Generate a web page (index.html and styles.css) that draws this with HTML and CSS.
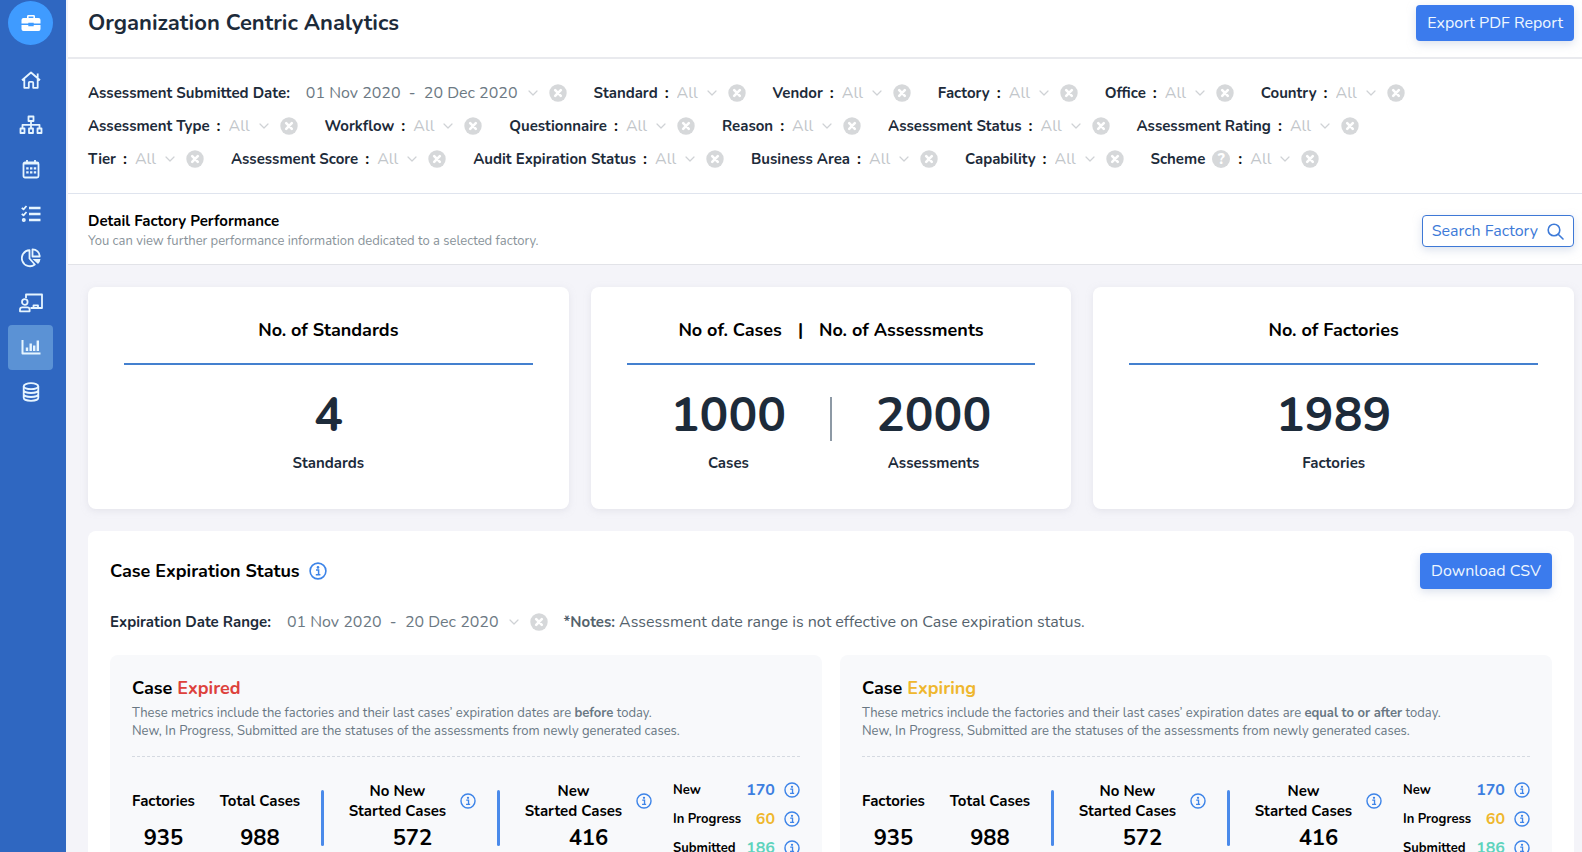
FILE: index.html
```html
<!DOCTYPE html>
<html lang="en">
<head>
<meta charset="utf-8">
<meta name="viewport" content="width=device-width, initial-scale=1">
<title>Organization Centric Analytics</title>
<link rel="stylesheet" href="styles.css">
</head>
<body>
<svg class="sprite" aria-hidden="true">
  <symbol id="clear" viewBox="0 0 18 18"><circle cx="9" cy="9" r="8.7" fill="#d6d8da"/><path d="M6.2 6.2l5.6 5.6M11.8 6.2l-5.6 5.6" stroke="#fff" stroke-width="2.6" stroke-linecap="round"/></symbol>
  <symbol id="chevron" viewBox="0 0 10 6"><path d="M1 1l4 4 4-4" fill="none" stroke="#cfd2d5" stroke-width="1.2" stroke-linecap="round" stroke-linejoin="round"/></symbol>
  <symbol id="info" viewBox="0 0 18 18"><circle cx="9" cy="9" r="7.9" fill="none" stroke="#3d84e8" stroke-width="1.6"/><circle cx="9" cy="5.4" r="1.3" fill="#3d84e8"/><path d="M7 8h2.6v4.6M6.8 12.8h4.6" fill="none" stroke="#3d84e8" stroke-width="1.5"/></symbol>
</svg>
<div class="app">
  <aside class="sidebar">
    <a class="brand" href="#" aria-label="Workspace"><svg width="20" height="18" viewBox="0 0 20 18"><path fill="#fff" fill-rule="evenodd" d="M6 4V2.400Q6 1 7.400 1h5.200Q14 1 14 2.400V4h3.500Q19.500 4 19.500 6v3.500h-6.800V8.700H7.300v.8H.5V6q0-2 2-2zM7.600 4h4.800V2.600H7.600zM.5 10.900h6.800v1.400h5.400v-1.400h6.800V15q0 2-2 2h-15q-2 0-2-2z"/></svg></a>
    <nav class="nav" aria-label="Main">
      <a href="#" aria-label="Home"><svg width="20" height="18" viewBox="0 0 20 18"><path d="M1 9.300L10 1.500l9 7.800M3.300 8v8.800h4.500v-5q0-1 1-1h2.400q1 0 1 1v5h4.500V8M16.700 6.500V2.500"/></svg></a>
      <a href="#" aria-label="Organization"><svg width="24" height="20" viewBox="0 0 24 20"><path d="M9.500 1.500h5v4.500h-5zM12 6v7M3.500 13V9.800h17V13M1.500 13.500h4v4.500h-4zM10 13.500h4v4.500h-4zM18.500 13.500h4v4.500h-4z"/></svg></a>
      <a href="#" aria-label="Calendar"><svg width="18" height="20" viewBox="0 0 18 20"><rect x="1.500" y="3.500" width="15" height="15" rx="1.500"/><path d="M2 4.500h14M5 1v3M13 1v3"/><path stroke-width="2.200" stroke-dasharray="2.400 1.400" d="M4.200 9.400h10M4.200 13.400h10"/></svg></a>
      <a href="#" aria-label="Checklists"><svg width="20" height="18" viewBox="0 0 20 18"><path stroke-width="2.300" d="M8 3h11.500M8 9h11.500M8 15h11.500"/><path d="M.8 2.800l1.700 1.500L5.500 1M.8 8.800l1.700 1.500L5.500 7"/><circle cx="2.800" cy="15" r="1.100"/></svg></a>
      <a href="#" aria-label="Reports"><svg width="20" height="20" viewBox="0 0 20 20"><path d="M8.500 2.200a8 8 0 1 0 5.300 14.300L8.500 10.500zM11.500 1.300v7.200h7.200a7.300 7.300 0 0 0-7.200-7.200z"/><path class="solid" d="M11.500 11h8a8 8 0 0 1-2.500 5z"/></svg></a>
      <a href="#" aria-label="Training"><svg width="24" height="20" viewBox="0 0 24 20"><path d="M7 5V1.500h16V15H11.500M14.500 15v-2.600h4.500V15"/><circle cx="5.800" cy="9" r="2.800"/><path d="M1 18.300v-1.700q0-2.300 2.300-2.300h5q2.300 0 2.300 2.300v1.700z"/></svg></a>
      <a class="active" href="#" aria-label="Analytics" aria-current="page"><svg width="20" height="18" viewBox="0 0 20 18"><path stroke-width="2" d="M1.500 2v13.500h18"/><path stroke-width="2.400" d="M6 9.500v3.500M9.700 5.500V13M13.200 7.500V13M16.800 2.500V13"/></svg></a>
      <a href="#" aria-label="Data"><svg width="18" height="20" viewBox="0 0 18 20"><ellipse cx="9" cy="4.200" rx="7.300" ry="3"/><path d="M1.700 4.200v11.600c0 1.700 3.300 3 7.300 3s7.300-1.300 7.300-3V4.200M1.700 8c0 1.700 3.300 3 7.300 3s7.300-1.300 7.300-3M1.700 12c0 1.700 3.300 3 7.300 3s7.300-1.300 7.300-3"/></svg></a>
    </nav>
  </aside>

  <main class="main">
    <header class="header">
      <h1>Organization Centric Analytics</h1>
      <button class="primary" type="button">Export PDF Report</button>
    </header>

    <section class="filters" aria-label="Filters">
      <div class="filter-row">
        <div class="filter date"><span class="name">Assessment Submitted Date:</span><button class="range" type="button">01 Nov 2020&nbsp; -&nbsp; 20 Dec 2020<svg class="chev"><use href="#chevron"/></svg></button><button class="clear" type="button" aria-label="Clear date"><svg><use href="#clear"/></svg></button></div>
        <div class="filter"><label for="f1">Standard</label><b>:</b><span class="pick"><select id="f1"><option>All</option></select><svg class="chev"><use href="#chevron"/></svg></span><button class="clear" type="button" aria-label="Clear standard"><svg><use href="#clear"/></svg></button></div>
        <div class="filter"><label for="f2">Vendor</label><b>:</b><span class="pick"><select id="f2"><option>All</option></select><svg class="chev"><use href="#chevron"/></svg></span><button class="clear" type="button" aria-label="Clear vendor"><svg><use href="#clear"/></svg></button></div>
        <div class="filter"><label for="f3">Factory</label><b>:</b><span class="pick"><select id="f3"><option>All</option></select><svg class="chev"><use href="#chevron"/></svg></span><button class="clear" type="button" aria-label="Clear factory"><svg><use href="#clear"/></svg></button></div>
        <div class="filter"><label for="f4">Office</label><b>:</b><span class="pick"><select id="f4"><option>All</option></select><svg class="chev"><use href="#chevron"/></svg></span><button class="clear" type="button" aria-label="Clear office"><svg><use href="#clear"/></svg></button></div>
        <div class="filter"><label for="f5">Country</label><b>:</b><span class="pick"><select id="f5"><option>All</option></select><svg class="chev"><use href="#chevron"/></svg></span><button class="clear" type="button" aria-label="Clear country"><svg><use href="#clear"/></svg></button></div>
      </div>
      <div class="filter-row">
        <div class="filter"><label for="f6">Assessment Type</label><b>:</b><span class="pick"><select id="f6"><option>All</option></select><svg class="chev"><use href="#chevron"/></svg></span><button class="clear" type="button" aria-label="Clear assessment type"><svg><use href="#clear"/></svg></button></div>
        <div class="filter"><label for="f7">Workflow</label><b>:</b><span class="pick"><select id="f7"><option>All</option></select><svg class="chev"><use href="#chevron"/></svg></span><button class="clear" type="button" aria-label="Clear workflow"><svg><use href="#clear"/></svg></button></div>
        <div class="filter"><label for="f8">Questionnaire</label><b>:</b><span class="pick"><select id="f8"><option>All</option></select><svg class="chev"><use href="#chevron"/></svg></span><button class="clear" type="button" aria-label="Clear questionnaire"><svg><use href="#clear"/></svg></button></div>
        <div class="filter"><label for="f9">Reason</label><b>:</b><span class="pick"><select id="f9"><option>All</option></select><svg class="chev"><use href="#chevron"/></svg></span><button class="clear" type="button" aria-label="Clear reason"><svg><use href="#clear"/></svg></button></div>
        <div class="filter"><label for="f10">Assessment Status</label><b>:</b><span class="pick"><select id="f10"><option>All</option></select><svg class="chev"><use href="#chevron"/></svg></span><button class="clear" type="button" aria-label="Clear assessment status"><svg><use href="#clear"/></svg></button></div>
        <div class="filter"><label for="f11">Assessment Rating</label><b>:</b><span class="pick"><select id="f11"><option>All</option></select><svg class="chev"><use href="#chevron"/></svg></span><button class="clear" type="button" aria-label="Clear assessment rating"><svg><use href="#clear"/></svg></button></div>
      </div>
      <div class="filter-row">
        <div class="filter"><label for="f12">Tier</label><b>:</b><span class="pick"><select id="f12"><option>All</option></select><svg class="chev"><use href="#chevron"/></svg></span><button class="clear" type="button" aria-label="Clear tier"><svg><use href="#clear"/></svg></button></div>
        <div class="filter"><label for="f13">Assessment Score</label><b>:</b><span class="pick"><select id="f13"><option>All</option></select><svg class="chev"><use href="#chevron"/></svg></span><button class="clear" type="button" aria-label="Clear assessment score"><svg><use href="#clear"/></svg></button></div>
        <div class="filter"><label for="f14">Audit Expiration Status</label><b>:</b><span class="pick"><select id="f14"><option>All</option></select><svg class="chev"><use href="#chevron"/></svg></span><button class="clear" type="button" aria-label="Clear audit expiration status"><svg><use href="#clear"/></svg></button></div>
        <div class="filter"><label for="f15">Business Area</label><b>:</b><span class="pick"><select id="f15"><option>All</option></select><svg class="chev"><use href="#chevron"/></svg></span><button class="clear" type="button" aria-label="Clear business area"><svg><use href="#clear"/></svg></button></div>
        <div class="filter"><label for="f16">Capability</label><b>:</b><span class="pick"><select id="f16"><option>All</option></select><svg class="chev"><use href="#chevron"/></svg></span><button class="clear" type="button" aria-label="Clear capability"><svg><use href="#clear"/></svg></button></div>
        <div class="filter"><label for="f17">Scheme</label><button class="help" type="button" aria-label="About schemes">?</button><b>:</b><span class="pick"><select id="f17"><option>All</option></select><svg class="chev"><use href="#chevron"/></svg></span><button class="clear" type="button" aria-label="Clear scheme"><svg><use href="#clear"/></svg></button></div>
      </div>
    </section>

    <section class="detail">
      <div>
        <h2>Detail Factory Performance</h2>
        <p>You can view further performance information dedicated to a selected factory.</p>
      </div>
      <button class="outline" type="button">Search Factory<svg width="17" height="17" viewBox="0 0 17 17"><circle cx="7" cy="7" r="5.800"/><path d="M11.200 11.200l4.800 4.800"/></svg></button>
    </section>

    <div class="content">
      <div class="cards">
        <section class="card">
          <h2>No. of Standards</h2>
          <div class="figures"><div class="figure"><strong>4</strong><span>Standards</span></div></div>
        </section>
        <section class="card">
          <h2><span>No of. Cases</span><span>|</span><span>No. of Assessments</span></h2>
          <div class="figures"><div class="figure"><strong>1000</strong><span>Cases</span></div><i class="rule"></i><div class="figure"><strong>2000</strong><span>Assessments</span></div></div>
        </section>
        <section class="card">
          <h2>No. of Factories</h2>
          <div class="figures"><div class="figure"><strong>1989</strong><span>Factories</span></div></div>
        </section>
      </div>

      <section class="status">
        <div class="status-head">
          <h2>Case Expiration Status</h2>
          <button class="info large" type="button" aria-label="About case expiration status"><svg><use href="#info"/></svg></button>
          <button class="primary" type="button">Download CSV</button>
        </div>
        <div class="filter status-range"><span class="name">Expiration Date Range:</span><button class="range" type="button">01 Nov 2020&nbsp; -&nbsp; 20 Dec 2020<svg class="chev"><use href="#chevron"/></svg></button><button class="clear" type="button" aria-label="Clear expiration date"><svg><use href="#clear"/></svg></button><p class="note"><strong>*Notes:</strong> Assessment date range is not effective on Case expiration status.</p></div>
        <div class="panels">
          <article class="panel">
            <h3>Case <span class="red">Expired</span></h3>
            <p>These metrics include the factories and their last cases’ expiration dates are <strong>before</strong> today.<br>New, In Progress, Submitted are the statuses of the assessments from newly generated cases.</p>
            <div class="stats">
              <div class="stat"><div class="stat-name">Factories</div><strong>935</strong></div>
              <div class="stat"><div class="stat-name">Total Cases</div><strong>988</strong></div>
              <i class="bar"></i>
              <div class="stat"><div class="stat-name"><span>No New<br>Started Cases</span><button class="info" type="button" aria-label="About no new started cases"><svg><use href="#info"/></svg></button></div><strong>572</strong></div>
              <i class="bar"></i>
              <div class="stat"><div class="stat-name"><span>New<br>Started Cases</span><button class="info" type="button" aria-label="About new started cases"><svg><use href="#info"/></svg></button></div><strong>416</strong></div>
              <dl class="breakdown">
                <dt>New</dt><dd class="blue">170</dd><dd><button class="info" type="button" aria-label="About new"><svg><use href="#info"/></svg></button></dd>
                <dt>In Progress</dt><dd class="yellow">60</dd><dd><button class="info" type="button" aria-label="About in progress"><svg><use href="#info"/></svg></button></dd>
                <dt>Submitted</dt><dd class="teal">186</dd><dd><button class="info" type="button" aria-label="About submitted"><svg><use href="#info"/></svg></button></dd>
              </dl>
            </div>
          </article>
          <article class="panel">
            <h3>Case <span class="yellow">Expiring</span></h3>
            <p>These metrics include the factories and their last cases’ expiration dates are <strong>equal to or after</strong> today.<br>New, In Progress, Submitted are the statuses of the assessments from newly generated cases.</p>
            <div class="stats">
              <div class="stat"><div class="stat-name">Factories</div><strong>935</strong></div>
              <div class="stat"><div class="stat-name">Total Cases</div><strong>988</strong></div>
              <i class="bar"></i>
              <div class="stat"><div class="stat-name"><span>No New<br>Started Cases</span><button class="info" type="button" aria-label="About no new started cases"><svg><use href="#info"/></svg></button></div><strong>572</strong></div>
              <i class="bar"></i>
              <div class="stat"><div class="stat-name"><span>New<br>Started Cases</span><button class="info" type="button" aria-label="About new started cases"><svg><use href="#info"/></svg></button></div><strong>416</strong></div>
              <dl class="breakdown">
                <dt>New</dt><dd class="blue">170</dd><dd><button class="info" type="button" aria-label="About new"><svg><use href="#info"/></svg></button></dd>
                <dt>In Progress</dt><dd class="yellow">60</dd><dd><button class="info" type="button" aria-label="About in progress"><svg><use href="#info"/></svg></button></dd>
                <dt>Submitted</dt><dd class="teal">186</dd><dd><button class="info" type="button" aria-label="About submitted"><svg><use href="#info"/></svg></button></dd>
              </dl>
            </div>
          </article>
        </div>
      </section>
    </div>
  </main>
</div>
</body>
</html>
```
FILE: styles.css
```css
* { box-sizing: border-box; }
body {
  margin: 0;
  font: 16px/20px Nunito, "Open Sans", "Noto Sans", sans-serif;
  color: #1d2b3a;
  background: #f4f4f9;
}
h1, h2, h3, p, dl, dd { margin: 0; }
button, select { font: inherit; color: inherit; border: 0; padding: 0; margin: 0; background: none; cursor: pointer; }
.sprite { display: none; }
.app { display: flex; height: 100vh; overflow: hidden; }

.sidebar { flex: none; width: 66px; padding: 1px 13px 0 8px; background: #2f67c1; }
.brand { display: grid; place-items: center; height: 44px; border-radius: 50%; background: #3f9bff; }
.nav { display: flex; flex-direction: column; height: 356px; margin-top: 13px; }
.nav a { flex: 1; display: grid; place-items: center; border-radius: 4px; }
.nav a.active { background: #5b92d5; }
.nav svg { fill: none; stroke: #e6f5ff; stroke-width: 1.8; stroke-linejoin: round; }
.nav .solid { fill: #e6f5ff; stroke: none; }

.main { flex: 1; min-width: 0; overflow: hidden; border-left: 2px solid #f1f4f9; }
.header { display: flex; justify-content: space-between; align-items: flex-start; padding: 5px 8px 16px 20px; background: #fff; border-bottom: 2px solid #e9eaee; }
h1 { font-size: 22px; line-height: 36px; font-weight: 700; }
.primary { padding: 8px 11px; border-radius: 4px; background: #3b7bed; color: #eef7ff; box-shadow: 0 3px 8px #b9c6dd80; }

.filters { display: grid; gap: 13px; padding: 24px 8px 24px 20px; background: #fff; border-bottom: 1px solid #dfe4ee; }
.filter-row { display: flex; gap: 27px; }
.filter { display: flex; align-items: center; white-space: nowrap; }
.filter label, .filter .name { font-size: 15px; font-weight: 700; }
.filter b { padding: 0 8px 0 7px; color: #111; font-weight: 700; }
.pick { display: grid; align-items: center; }
.pick > * { grid-area: 1 / 1; }
.pick select { appearance: none; width: 40px; height: 20px; line-height: 20px; color: #c2c6ca; outline: 0; }
.chev { width: 10px; height: 6px; justify-self: end; pointer-events: none; }
.clear { width: 18px; height: 18px; margin-left: 11px; }
.clear svg, .info svg { display: block; width: 100%; height: 100%; }
.range { display: flex; align-items: center; margin-left: 16px; color: #6c7983; }
.range .chev { margin-left: 10px; }
.help { width: 18px; height: 18px; margin: 0 1px 0 7px; border-radius: 50%; background: #d6d8da; color: #fff; font-size: 15px; line-height: 18px; font-weight: 800; }

.detail { display: flex; justify-content: space-between; align-items: center; padding: 17px 8px 13px 20px; background: #fff; border-bottom: 1px solid #e2e3e8; }
.detail h2 { font-size: 15px; line-height: 20px; font-weight: 700; color: #000; }
.detail p { font-size: 13px; line-height: 20px; color: #89939a; }
.outline { display: flex; align-items: center; gap: 9px; padding: 5px 9px; border: 1px solid #3d78d6; border-radius: 4px; background: #fff; color: #3d7ad8; box-shadow: 0 3px 8px #b9c6dd80; }
.outline svg { fill: none; stroke: #3d7ad8; stroke-width: 1.6; stroke-linecap: round; }

.content { padding: 22px 8px 0 20px; }
.cards { display: grid; grid-template-columns: repeat(3, 1fr); gap: 22px; }
.card { padding: 31px 36px 36px; border-radius: 8px; background: #fff; box-shadow: 0 2px 6px #d5d6e080; }
.card h2 { display: flex; justify-content: center; gap: 16px; padding-bottom: 21px; border-bottom: 2px solid #4480cf; font-size: 18px; line-height: 24px; font-weight: 700; color: #000; }
.figures { display: flex; justify-content: center; gap: 44px; padding-top: 23px; }
.figure { display: flex; flex-direction: column; align-items: center; gap: 11px; }
.figure strong { font-size: 48px; line-height: 54px; font-weight: 700; }
.figure span { font-size: 15px; font-weight: 700; }
.rule { width: 2px; height: 44px; margin-top: 9px; background: #8d99a5; }

.status { margin-top: 22px; padding: 22px 22px 40px; border-radius: 8px; background: #fff; }
.status-head { display: flex; align-items: center; gap: 9px; }
.status-head h2 { font-size: 18px; line-height: 24px; font-weight: 700; color: #000; }
.status-head .primary { margin-left: auto; }
.info { flex: none; display: block; width: 16px; height: 16px; }
.info.large { width: 18px; height: 18px; }
.status-range { margin: 23px 0; }
.note { margin-left: 16px; color: #54626c; }
.note strong { font-size: 15px; font-weight: 700; }
.panels { display: grid; grid-template-columns: 1fr 1fr; gap: 18px; }
.panel { padding: 21px 22px 24px; border-radius: 8px; background: #f8f9fb; }
.panel h3 { font-size: 18px; line-height: 24px; font-weight: 700; color: #000; }
.panel p { padding: 4px 0 16px; border-bottom: 1px dashed #d5dae1; font-size: 13px; line-height: 18px; color: #687783; white-space: nowrap; }
.panel p strong { font-weight: 700; }
.red { color: #dd413c; }
.yellow { color: #efb72e; }
.blue { color: #3d7fe0; }
.teal { color: #5fd3bd; }
.stats { display: flex; justify-content: space-between; align-items: flex-start; padding-top: 23px; color: #000; }
.stat { display: flex; flex-direction: column; align-items: center; gap: 3px; padding-top: 1px; }
.stat + .stat, .bar + .stat { padding-left: 4px; }
.stat-name { display: flex; align-items: center; gap: 14px; height: 40px; text-align: center; white-space: nowrap; font-size: 15px; font-weight: 700; }
.stat strong { font-size: 22px; line-height: 28px; font-weight: 700; }
.bar { width: 3px; height: 56px; margin-top: 10px; border-radius: 2px; background: #4a8aea; }
.breakdown { display: grid; grid-template-columns: auto auto auto; column-gap: 5px; row-gap: 9px; align-items: center; font-weight: 700; }
.breakdown dt { font-size: 13px; }
.breakdown dd { text-align: right; }
.breakdown dd .info { margin-left: 4px; }
```
